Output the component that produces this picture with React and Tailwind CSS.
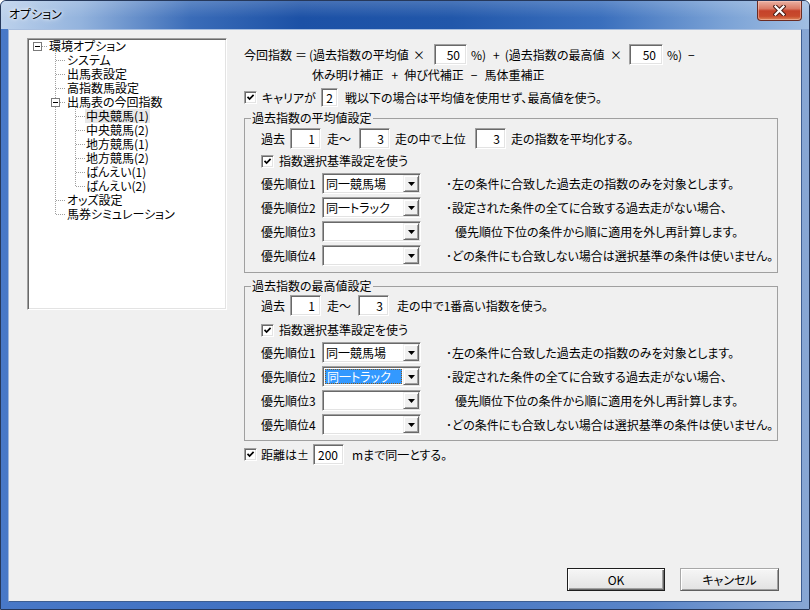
import React from "react";

function Edit({ value, className = "" }) {
  return (
    <div
      className={
        "flex items-center justify-end shrink-0 bg-white border border-t-[#a0a0a0] border-l-[#a0a0a0] border-b-white border-r-white shadow-[inset_1px_1px_0_#696969,inset_-1px_-1px_0_#e3e3e3] " +
        className
      }
    >
      <span className="leading-[14px]">{value}</span>
    </div>
  );
}

function Check() {
  return (
    <div className="w-[13px] h-[13px] shrink-0 flex items-center justify-center bg-white border border-t-[#a0a0a0] border-l-[#a0a0a0] border-b-white border-r-white shadow-[inset_1px_1px_0_#696969,inset_-1px_-1px_0_#e3e3e3]">
      <svg width="9" height="9" viewBox="0 0 9 9">
        <path d="M1.5 3.8 L3.6 6 L7.6 1.8" stroke="#000" strokeWidth="1.7" fill="none" />
      </svg>
    </div>
  );
}

function Combo({ value, focused }) {
  return (
    <div className="w-[99px] h-[21px] shrink-0 flex p-[1px] bg-white border border-t-[#a0a0a0] border-l-[#a0a0a0] border-b-white border-r-white shadow-[inset_1px_1px_0_#696969,inset_-1px_-1px_0_#e3e3e3]">
      <div className="flex-1 flex p-[1px]">
        {focused ? (
          <span className="flex-1 flex items-center pl-[1px] bg-[#3399ff] text-white border border-dotted border-[#8a5a1c] leading-[13px]">
            {value}
          </span>
        ) : (
          <span className="flex-1 flex items-center pl-[1px] leading-[13px]">{value}</span>
        )}
      </div>
      <div className="w-[16px] h-[17px] flex items-center justify-center bg-[#f0f0f0] border border-t-[#f0f0f0] border-l-[#f0f0f0] border-b-[#696969] border-r-[#696969] shadow-[inset_1px_1px_0_#fff,inset_-1px_-1px_0_#a0a0a0]">
        <svg width="7" height="4" viewBox="0 0 7 4">
          <polygon points="0,0 7,0 3.5,4" fill="#000" />
        </svg>
      </div>
    </div>
  );
}

function PriorityRows({ focusedIndex }) {
  const rows = [
    { label: "優先順位1", value: "同一競馬場", desc: "･左の条件に合致した過去走の指数のみを対象とします。", indent: false },
    { label: "優先順位2", value: "同一トラック", desc: "･設定された条件の全てに合致する過去走がない場合、", indent: false },
    { label: "優先順位3", value: "", desc: "優先順位下位の条件から順に適用を外し再計算します。", indent: true },
    { label: "優先順位4", value: "", desc: "･どの条件にも合致しない場合は選択基準の条件は使いません。", indent: false },
  ];
  return (
    <div className="flex flex-col gap-[3px]">
      {rows.map((r, i) => (
        <div key={i} className="h-[21px] flex items-center whitespace-nowrap">
          <span className="w-[61px] shrink-0">{r.label}</span>
          <Combo value={r.value} focused={i === focusedIndex} />
          <span className={r.indent ? "ml-[34px]" : "ml-[25px]"}>{r.desc}</span>
        </div>
      ))}
    </div>
  );
}

const treeItems = [
  { t: "環境オプション", lvl: 0 },
  { t: "システム", lvl: 1 },
  { t: "出馬表設定", lvl: 1 },
  { t: "高指数馬設定", lvl: 1 },
  { t: "出馬表の今回指数", lvl: 1 },
  { t: "中央競馬(1)", lvl: 2, sel: true },
  { t: "中央競馬(2)", lvl: 2 },
  { t: "地方競馬(1)", lvl: 2 },
  { t: "地方競馬(2)", lvl: 2 },
  { t: "ばんえい(1)", lvl: 2 },
  { t: "ばんえい(2)", lvl: 2 },
  { t: "オッズ設定", lvl: 1 },
  { t: "馬券シミュレーション", lvl: 1 },
];

function TreeLines() {
  const dot = { stroke: "#a0a0a0", strokeWidth: 1, strokeDasharray: "1 1" };
  const rowY = (i) => 7.5 + 14 * i;
  const lvl1 = [1, 2, 3, 11, 12];
  const lvl2 = [5, 6, 7, 8, 9, 10];
  return (
    <svg className="absolute left-0 top-0 pointer-events-none" width="196" height="200" viewBox="0 0 196 200">
      <line x1="14" y1={rowY(0)} x2="20" y2={rowY(0)} {...dot} />
      <line x1="27.5" y1="14" x2="27.5" y2={rowY(12)} {...dot} />
      {lvl1.map((i) => (
        <line key={i} x1="28" y1={rowY(i)} x2="38" y2={rowY(i)} {...dot} />
      ))}
      <line x1="32" y1={rowY(4)} x2="38" y2={rowY(4)} {...dot} />
      <line x1="47.5" y1="68" x2="47.5" y2={rowY(10)} {...dot} />
      {lvl2.map((i) => (
        <line key={i} x1="48" y1={rowY(i)} x2="57" y2={rowY(i)} {...dot} />
      ))}
      <rect x="5.5" y="3.5" width="8" height="8" fill="#fff" stroke="#7a7a7a" />
      <line x1="7" y1="7.5" x2="12" y2="7.5" stroke="#000" />
      <rect x="23.5" y="59.5" width="8" height="8" fill="#fff" stroke="#7a7a7a" />
      <line x1="25" y1="63.5" x2="30" y2="63.5" stroke="#000" />
    </svg>
  );
}

function Tree() {
  return (
    <div className="w-[200px] h-[272px] shrink-0 bg-white border border-t-[#a0a0a0] border-l-[#a0a0a0] border-b-white border-r-white shadow-[inset_1px_1px_0_#696969,inset_-1px_-1px_0_#e3e3e3]">
      <div className="relative w-full h-full">
        <TreeLines />
        <div className="flex flex-col">
          {treeItems.map((it, i) => (
            <div
              key={i}
              className={
                "h-[14px] flex items-center whitespace-nowrap " +
                (it.lvl === 0 ? "pl-[20px]" : it.lvl === 1 ? "pl-[38px]" : "pl-[57px]")
              }
            >
              <span className={"h-[14px] px-[1px] flex items-center leading-[14px] " + (it.sel ? "bg-[#e8e8e8]" : "")}>
                {it.t}
              </span>
            </div>
          ))}
        </div>
      </div>
    </div>
  );
}

function CloseButton() {
  return (
    <div className="w-[45px] h-[20px] flex items-center justify-center rounded-b-[4px] border border-t-0 border-[#6a2b22] bg-[linear-gradient(180deg,#eab1a3_0%,#da7b66_40%,#c5422a_52%,#c84a2c_80%,#de8659_100%)] shadow-[inset_0_0_0_1px_rgba(255,210,200,0.45)]">
      <svg width="13" height="11" viewBox="0 0 13 11">
        <path d="M2.5 1.5 L10.5 9.5 M10.5 1.5 L2.5 9.5" stroke="#4b1d15" strokeWidth="4.2" strokeLinecap="square" fill="none" />
        <path d="M2.5 1.5 L10.5 9.5 M10.5 1.5 L2.5 9.5" stroke="#fff" strokeWidth="2.2" strokeLinecap="square" fill="none" />
      </svg>
    </div>
  );
}

export default function App() {
  return (
    <div className="w-[810px] h-[610px] bg-white">
      <div className="w-[810px] h-[610px] flex flex-col border border-[#26385a] rounded-t-[6px] overflow-hidden bg-[linear-gradient(90deg,#4878c7_0%,#3e6fc0_40%,#5a85c8_80%,#88a7d4_100%)] font-['Noto_Sans_CJK_JP',sans-serif] text-[12px] leading-[16px] text-black [font-feature-settings:'palt']">
        {/* Title bar */}
        <div className="h-[28px] shrink-0 flex justify-between pr-[7px] bg-[linear-gradient(180deg,rgba(255,255,255,0.18)_0%,rgba(255,255,255,0)_60%),linear-gradient(90deg,#bcd1ec_0px,#93b3dd_80px,#3a6cb8_190px,#1c51a6_300px,#2157aa_450px,#3a6fbd_600px,#79a1d5_720px,#a2bfe3_810px)]">
          <div className="h-[26px] flex items-center pl-[8px] [text-shadow:0_0_6px_#fff,0_0_3px_#fff]">オプション</div>
          <CloseButton />
        </div>

        {/* Client */}
        <div className="flex-1 mx-[7px] mb-[7px] flex flex-col bg-[#f0f0f0] border border-[#3d5e92] border-t-[#a9bfdf] border-l-[#9fb6da]">
          <div className="flex pt-[8px] pl-[18px]">
            <Tree />

            <div className="ml-[17px] w-[534px] flex flex-col whitespace-nowrap">
              {/* Formula line 1 */}
              <div className="mt-[6px] h-[21px] flex items-center">
                <div className="w-[190px] flex items-center">
                  <span>今回指数</span>
                  <span className="ml-[3px]">＝</span>
                  <span className="ml-[2px]">(過去指数の平均値</span>
                  <span className="ml-auto mr-[9px]">×</span>
                </div>
                <Edit value="50" className="w-[33px] h-[21px] pr-[6px]" />
                <div className="w-[162px] flex items-center">
                  <span className="ml-[4px]">%)</span>
                  <span className="ml-[7px]">+</span>
                  <span className="ml-[5px]">(過去指数の最高値</span>
                  <span className="ml-auto mr-[7px]">×</span>
                </div>
                <Edit value="50" className="w-[34px] h-[21px] pr-[6px]" />
                <span className="ml-[4px]">%)</span>
                <span className="ml-[6px]">−</span>
              </div>

              {/* Formula line 2 */}
              <div className="mt-[2px] h-[16px] flex items-center pl-[68px]">
                <span>休み明け補正</span>
                <span className="ml-[8px]">+</span>
                <span className="ml-[6px]">伸び代補正</span>
                <span className="ml-[7px]">−</span>
                <span className="ml-[7px]">馬体重補正</span>
              </div>

              {/* Carrier line */}
              <div className="mt-[5px] h-[19px] flex items-center">
                <Check />
                <span className="w-[64px] pl-[5px]">キャリアが</span>
                <Edit value="2" className="w-[17px] h-[19px] pr-[4px]" />
                <span className="pl-[7px]">戦以下の場合は平均値を使用せず、最高値を使う。</span>
              </div>

              {/* Group 1 */}
              <fieldset className="mt-[3px] w-[534px] min-w-0 border border-[#a0a0a0]">
                <legend className="ml-[6px] px-[1px] h-[16px] leading-[16px]">過去指数の平均値設定</legend>
                <div className="pl-[16px] pr-[6px] pt-[2px] pb-[6px] flex flex-col">
                  <div className="h-[21px] flex items-center">
                    <span className="w-[29px]">過去</span>
                    <Edit value="1" className="w-[31px] h-[21px] pr-[5px]" />
                    <span className="w-[38px] pl-[6px]">走～</span>
                    <Edit value="3" className="w-[31px] h-[21px] pr-[5px]" />
                    <span className="w-[85px] pl-[5px]">走の中で上位</span>
                    <Edit value="3" className="w-[31px] h-[21px] pr-[5px]" />
                    <span className="pl-[5px]">走の指数を平均化する。</span>
                  </div>
                  <div className="mt-[4px] h-[16px] flex items-center">
                    <Check />
                    <span className="ml-[5px]">指数選択基準設定を使う</span>
                  </div>
                  <div className="mt-[4px]">
                    <PriorityRows focusedIndex={-1} />
                  </div>
                </div>
              </fieldset>

              {/* Group 2 */}
              <fieldset className="mt-[5px] w-[534px] min-w-0 border border-[#a0a0a0]">
                <legend className="ml-[6px] px-[1px] h-[16px] leading-[16px]">過去指数の最高値設定</legend>
                <div className="pl-[16px] pr-[6px] pt-[1px] pb-[5px] flex flex-col">
                  <div className="h-[21px] flex items-center">
                    <span className="w-[29px]">過去</span>
                    <Edit value="1" className="w-[31px] h-[21px] pr-[5px]" />
                    <span className="w-[37px] pl-[6px]">走～</span>
                    <Edit value="3" className="w-[31px] h-[21px] pr-[5px]" />
                    <span className="pl-[8px]">走の中で1番高い指数を使う。</span>
                  </div>
                  <div className="mt-[6px] h-[16px] flex items-center">
                    <Check />
                    <span className="ml-[5px]">指数選択基準設定を使う</span>
                  </div>
                  <div className="mt-[4px]">
                    <PriorityRows focusedIndex={1} />
                  </div>
                </div>
              </fieldset>

              {/* Distance */}
              <div className="mt-[3px] h-[21px] flex items-center">
                <Check />
                <span className="w-[56px] pl-[4px]">距離は±</span>
                <Edit value="200" className="w-[31px] h-[21px] pr-[5px]" />
                <span className="pl-[8px]">mまで同一とする。</span>
              </div>
            </div>
          </div>

          {/* Buttons */}
          <div className="mt-auto flex justify-end gap-[15px] pr-[22px] pb-[10px]">
            <button className="w-[98px] h-[23px] flex items-center justify-center bg-[linear-gradient(180deg,#f6f6f6,#ececec_50%,#e2e2e2)] border border-[#1e1e1e] shadow-[inset_1px_1px_0_#fff,inset_-1px_-1px_0_#696969,inset_-2px_-2px_0_#a0a0a0]">
              OK
            </button>
            <button className="w-[99px] h-[23px] flex items-center justify-center bg-[linear-gradient(180deg,#f6f6f6,#ececec_50%,#e2e2e2)] border border-[#a8a8a8] border-b-[#5f5f5f] border-r-[#5f5f5f] shadow-[inset_1px_1px_0_#fff,inset_-1px_-1px_0_#a0a0a0]">
              キャンセル
            </button>
          </div>
        </div>
      </div>
    </div>
  );
}
